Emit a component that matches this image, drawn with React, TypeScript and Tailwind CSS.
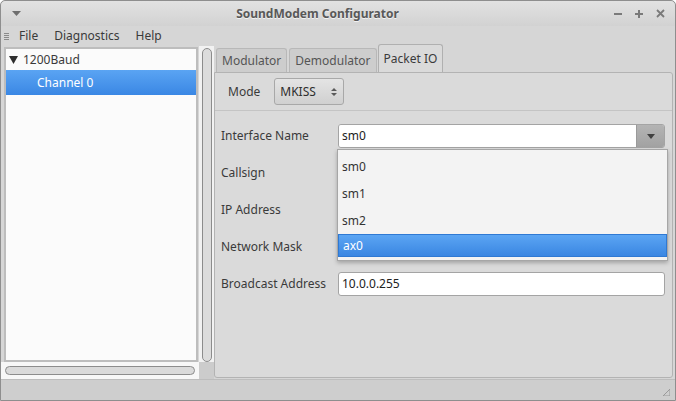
import React from 'react';

const font = { fontFamily: '"Noto Sans", "DejaVu Sans", sans-serif' };

const fields = [
  { label: 'Callsign' },
  { label: 'IP Address' },
  { label: 'Network Mask' },
];

const options = ['sm0', 'sm1', 'sm2'];

const TitleBar = () => (
  <div className="relative flex h-[25px] shrink-0 items-center bg-gradient-to-b from-[#e2e2e2] to-[#d2d2d2] rounded-t-[5px]">
    <svg className="ml-[11px]" width="9" height="6" viewBox="0 0 9 6">
      <path d="M0 0 H9 L4.5 5 Z" fill="#6e6e6e" />
    </svg>
    <div className="flex-1 text-center text-[12px] font-bold text-[#585858] [text-shadow:0_1px_0_#f2f2f2]">
      SoundModem Configurator
    </div>
    <div className="mr-[10px] flex items-center gap-[13px]">
      <svg width="8" height="8" viewBox="0 0 8 8">
        <rect x="0" y="3" width="8" height="2" fill="#7a7a7a" />
      </svg>
      <svg width="8" height="8" viewBox="0 0 8 8">
        <rect x="0" y="3" width="8" height="2" fill="#7a7a7a" />
        <rect x="3" y="0" width="2" height="8" fill="#7a7a7a" />
      </svg>
      <svg width="9" height="9" viewBox="0 0 9 9">
        <path d="M1 1 L8 8 M8 1 L1 8" stroke="#7a7a7a" strokeWidth="1.8" />
      </svg>
    </div>
  </div>
);

const MenuBar = () => (
  <div className="flex h-[20px] shrink-0 items-center text-[12px] text-[#3a3a3a]">
    <div className="ml-[3px] mr-[2px] flex flex-col gap-[1px]">
      <div className="h-px w-[5px] bg-[#8a8a8a]" />
      <div className="h-px w-[5px] bg-[#8a8a8a]" />
      <div className="h-px w-[5px] bg-[#8a8a8a]" />
      <div className="h-px w-[5px] bg-[#8a8a8a]" />
    </div>
    <span className="px-[8px]">File</span>
    <span className="px-[8px]">Diagnostics</span>
    <span className="px-[8px]">Help</span>
  </div>
);

const Tree = () => (
  <div className="flex w-[198px] shrink-0 flex-col">
    <div className="ml-[3px] mr-[1px] mt-[1px] flex-1 border-2 border-[#bdbdbd] bg-[#fbfbfb] text-[12px]">
      <div className="flex h-[21px] items-center">
        <svg className="ml-[3px] mr-[5px]" width="9" height="8" viewBox="0 0 9 8">
          <path d="M0 0 H9 L4.5 8 Z" fill="#2e2e2e" />
        </svg>
        <span className="text-[#3a3a3a]">1200Baud</span>
      </div>
      <div className="flex h-[25px] items-center bg-gradient-to-b from-[#5aa4f3] to-[#3a87e4] pl-[31px] text-white">
        Channel 0
      </div>
    </div>
    <div className="flex h-[17px] items-center bg-[#f7f7f7] px-[4px]">
      <div className="h-[9px] flex-1 rounded-full border border-[#8c8c8c] bg-[#dadada]" />
    </div>
  </div>
);

const VScroll = () => (
  <div className="flex w-[15px] shrink-0 flex-col">
    <div className="flex flex-1 justify-center bg-[#f2f2f2] pt-[2px]">
      <div className="w-[10px] rounded-full border border-[#8c8c8c] bg-[#dcdcdc]" />
    </div>
    <div className="h-[17px] bg-[#cccccc]" />
  </div>
);

const Tabs = () => (
  <div className="flex flex-1 flex-col pr-[2px]">
    <div className="flex h-[26px] items-end gap-[2px] pl-[2px] text-[12px]">
      <div className="flex h-[24px] items-center rounded-t-[3px] border border-b-0 border-[#b8b8b8] bg-[#cdcdcd] px-[5px] text-[#555]">
        Modulator
      </div>
      <div className="flex h-[24px] items-center rounded-t-[3px] border border-b-0 border-[#b8b8b8] bg-[#cdcdcd] px-[5px] text-[#555]">
        Demodulator
      </div>
      <div className="relative top-[1px] -ml-[1px] flex h-[29px] items-center rounded-t-[3px] border border-b-0 border-[#b0b0b0] bg-[#dadada] px-[5px] text-[#3a3a3a]">
        Packet IO
      </div>
    </div>
    <div className="relative mb-[1px] flex flex-1 flex-col rounded-[3px] rounded-tl-none border border-[#b3b3b3] bg-[#dadada] text-[12px] text-[#3a3a3a]">
      <div className="flex h-[38px] items-center border-b border-[#c4c4c4] pl-[13px]">
        <span className="mr-[14px]">Mode</span>
        <div className="flex h-[27px] w-[70px] items-center justify-between rounded-[3px] border border-[#a8a8a8] bg-gradient-to-b from-[#e4e4e4] to-[#d0d0d0] pl-[5px] pr-[6px] text-[#2e2e2e]">
          <span>MKISS</span>
          <svg width="6" height="10" viewBox="0 0 6 10">
            <path d="M0 4 L3 1 L6 4 Z M0 6 L3 9 L6 6 Z" fill="#5a5a5a" />
          </svg>
        </div>
      </div>
      <div className="flex flex-col gap-[13px] pl-[6px] pr-[7px] pt-[13px]">
        <div className="flex h-[24px] items-center">
          <span className="w-[117px] shrink-0">Interface Name</span>
          <div className="flex h-[24px] flex-1 overflow-hidden rounded-[3px] border border-[#a4a4a4]">
            <div className="flex flex-1 items-center bg-white pl-[3px] text-[#222]">sm0</div>
            <div className="flex w-[28px] items-center justify-center border-l border-[#9a9a9a] bg-gradient-to-b from-[#b4b4b4] to-[#a2a2a2]">
              <svg width="8" height="5" viewBox="0 0 8 5">
                <path d="M0 0 H8 L4 5 Z" fill="#404040" />
              </svg>
            </div>
          </div>
        </div>
        {fields.map((f) => (
          <div key={f.label} className="flex h-[24px] items-center">
            <span className="w-[117px] shrink-0">{f.label}</span>
            <div className="h-[24px] flex-1 rounded-[3px] border border-[#a4a4a4] bg-white" />
          </div>
        ))}
        <div className="flex h-[24px] items-center">
          <span className="w-[117px] shrink-0">Broadcast Address</span>
          <div className="flex h-[24px] flex-1 items-center rounded-[3px] border border-[#a4a4a4] bg-white pl-[3px] text-[#222]">
            10.0.0.255
          </div>
        </div>
      </div>
      <div className="absolute left-[122px] top-[76px] w-[331px] border border-[#a6a6a6] bg-[#f3f3f3] pt-[3px] shadow-[0_2px_4px_rgba(0,0,0,0.25)]">
        {options.map((o) => (
          <div key={o} className="flex h-[27px] items-center pl-[4px] text-[#333]">
            {o}
          </div>
        ))}
        <div className="flex h-[23px] items-center border border-[#2f79d3] bg-gradient-to-b from-[#5ba5f3] to-[#3a86e2] pl-[4px] text-white">
          ax0
        </div>
        <div className="h-[3px]" />
      </div>
    </div>
  </div>
);

export default function App() {
  return (
    <div style={font} className="flex h-[401px] w-[676px] flex-col overflow-hidden rounded-t-[5px] border border-[#8e8e8e] bg-[#d6d6d6]">
      <TitleBar />
      <MenuBar />
      <div className="flex flex-1 min-h-0">
        <Tree />
        <VScroll />
        <Tabs />
      </div>
      <div className="flex h-[21px] shrink-0 items-end justify-end border-t border-[#bdbdbd] bg-[#cecece] pb-[4px] pr-[5px]">
        <svg width="7" height="7" viewBox="0 0 7 7">
          <path d="M7 0 L7 7 L0 7 Z" fill="none" stroke="#9a9a9a" strokeWidth="1" />
        </svg>
      </div>
    </div>
  );
}
